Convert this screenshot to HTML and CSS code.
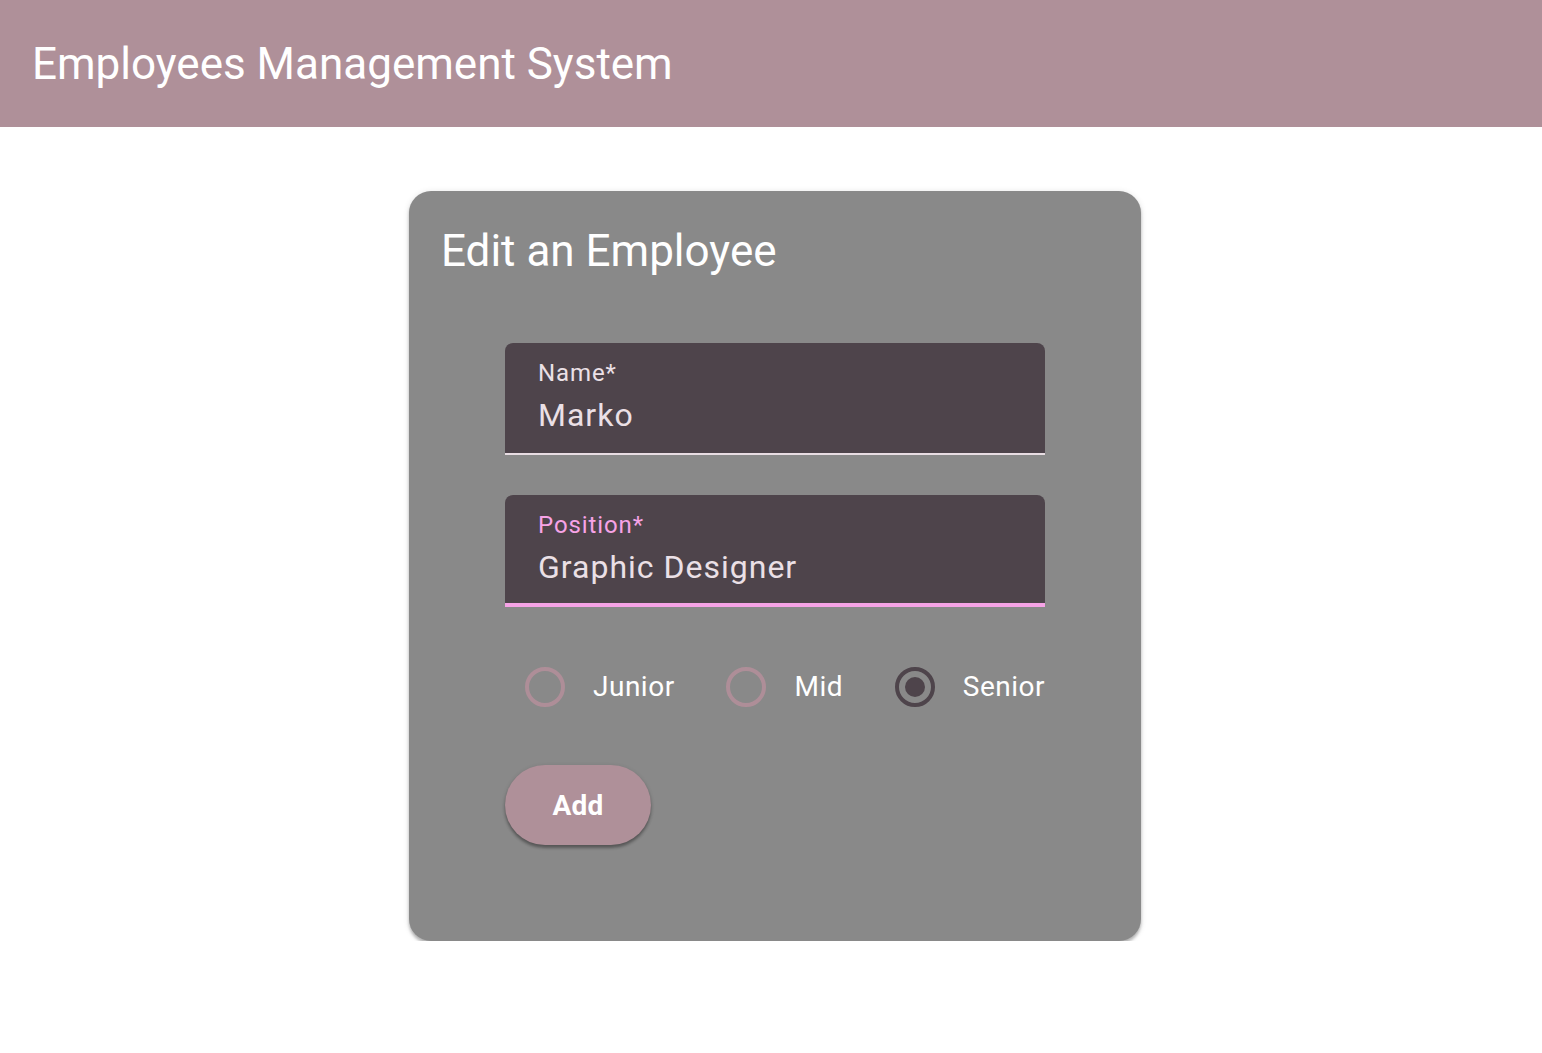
FILE: index.html
```html
<!DOCTYPE html>
<html lang="en">
<head>
<meta charset="utf-8">
<title>Employees Management System</title>
<link rel="stylesheet" href="styles.css">
</head>
<body>
<header class="toolbar">
  <span class="toolbar-title">Employees Management System</span>
</header>
<main class="page">
  <section class="card">
    <h1 class="card-title">Edit an Employee</h1>
    <form class="form">
      <div class="field">
        <label class="field-label">Name*</label>
        <div class="field-value">Marko</div>
      </div>
      <div class="field field-focused">
        <label class="field-label">Position*</label>
        <div class="field-value">Graphic Designer</div>
      </div>
      <div class="radio-group">
        <div class="radio"><span class="radio-ring"></span><span class="radio-label">Junior</span></div>
        <div class="radio"><span class="radio-ring"></span><span class="radio-label">Mid</span></div>
        <div class="radio radio-checked"><span class="radio-ring"><span class="radio-dot"></span></span><span class="radio-label">Senior</span></div>
      </div>
      <div class="actions">
        <button type="button" class="btn">Add</button>
      </div>
    </form>
  </section>
</main>
</body>
</html>
```

FILE: styles.css
```css
* { box-sizing: border-box; }
html, body { margin: 0; padding: 0; background: #ffffff; }
body { font-family: Roboto, "Liberation Sans", sans-serif; }

.toolbar {
  height: 127px;
  background: #af9099;
  display: flex;
  align-items: center;
  padding: 0 32px;
}
.toolbar-title {
  color: #ffffff;
  font-size: 44px;
  font-weight: 400;
  line-height: 1;
}

.page {
  display: flex;
  justify-content: center;
  padding-top: 64px;
}
.card {
  width: 732px;
  height: 750px;
  margin-left: 8px;
  background: #898989;
  border-radius: 22px;
  box-shadow: 0 3px 3px rgba(0,0,0,0.25), 0 1px 6px rgba(0,0,0,0.12);
  padding: 30px 32px 0 32px;
}
.card-title {
  margin: 0;
  color: #ffffff;
  font-size: 44px;
  font-weight: 400;
  line-height: 60px;
}

.form {
  width: 540px;
  margin: 62px auto 0;
  display: flex;
  flex-direction: column;
}
.field {
  height: 112px;
  background: #4e444b;
  border-radius: 8px 8px 0 0;
  border-bottom: 2px solid #e8dde3;
  padding: 14px 32px 0 33px;
  margin-bottom: 40px;
}
.field-focused {
  border-bottom: 4px solid #f6a3e6;
}
.field-label {
  display: block;
  color: #ebe0e6;
  font-size: 24px;
  line-height: 32px;
  letter-spacing: 0.9px;
}
.field-focused .field-label { color: #f6a3e6; }
.field-value {
  margin-top: 6px;
  color: #ebe0e6;
  font-size: 32px;
  line-height: 40px;
  letter-spacing: 1px;
}

.radio-group {
  display: flex;
  justify-content: space-between;
  align-items: center;
  height: 80px;
}
.radio {
  display: flex;
  align-items: center;
}
.radio-ring {
  width: 40px;
  height: 40px;
  margin-left: 20px;
  border: 4px solid #ae8e98;
  border-radius: 50%;
  display: flex;
  align-items: center;
  justify-content: center;
}
.radio-checked .radio-ring { border-color: #4e444b; }
.radio-dot {
  width: 20px;
  height: 20px;
  border-radius: 50%;
  background: #4e444b;
}
.radio-label {
  margin-left: 28px;
  color: #ffffff;
  font-size: 28px;
  letter-spacing: 0.5px;
  line-height: 40px;
}

.actions {
  margin-top: 38px;
  display: flex;
}
.btn {
  height: 80px;
  width: 146px;
  border: none;
  border-radius: 40px;
  background: #af9099;
  color: #ffffff;
  font-family: Roboto, "Liberation Sans", sans-serif;
  font-size: 28px;
  font-weight: 700;
  letter-spacing: 0.2px;
  box-shadow: 0 3px 3px rgba(0,0,0,0.3), 0 1px 4px rgba(0,0,0,0.15);
  padding: 0;
}
```
